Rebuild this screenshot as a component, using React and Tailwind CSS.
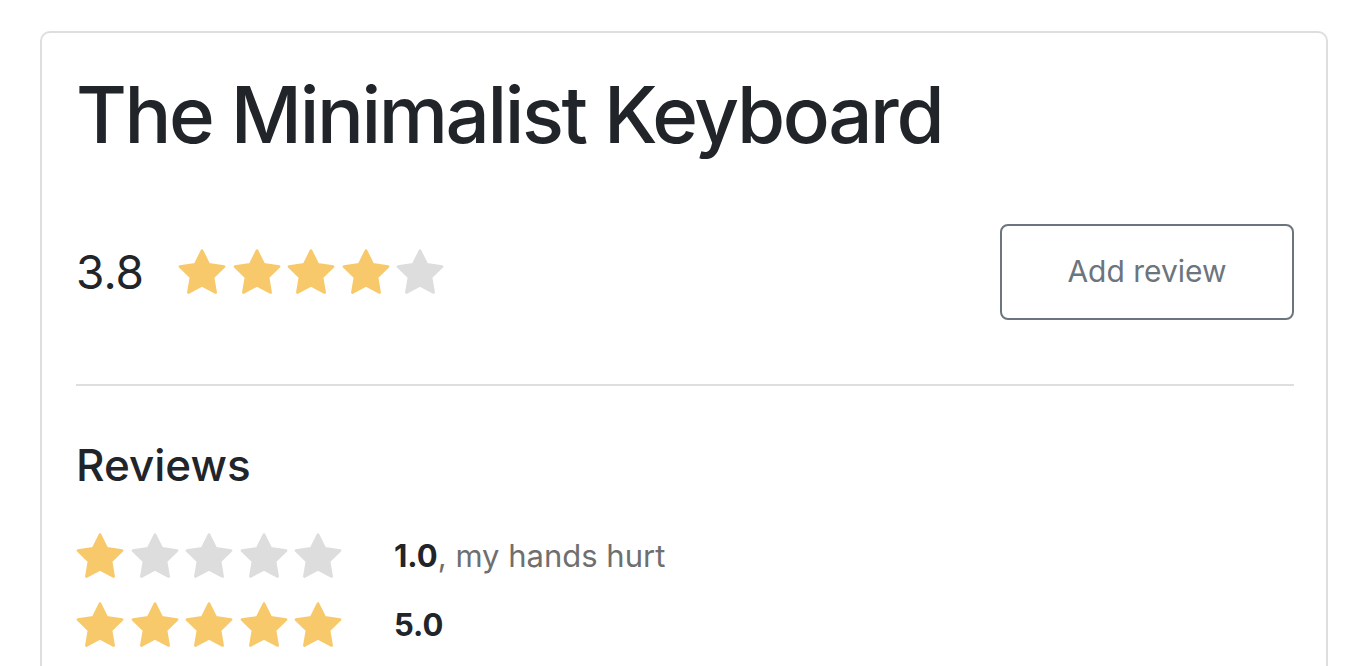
const GOLD = '#f8c96b';
const GRAY = '#dddddd';

function Star({ filled }) {
  const color = filled ? GOLD : GRAY;
  return (
    <svg width="48" height="45" viewBox="1.2 1.3 21.6 20.4" className="shrink-0">
      <path
        d="M12 2l3.09 6.26L22 9.27l-5 4.87 1.18 6.88L12 17.77l-6.18 3.25L7 14.14 2 9.27l6.91-1.01L12 2z"
        fill={color}
        stroke={color}
        strokeWidth="1.2"
        strokeLinejoin="round"
      />
    </svg>
  );
}

function Stars({ count }) {
  return (
    <div className="flex items-center gap-[6.5px]">
      {[0, 1, 2, 3, 4].map((i) => (
        <Star key={i} filled={i < count} />
      ))}
    </div>
  );
}

const reviews = [
  { rating: 1, score: '1.0', text: 'my hands hurt' },
  { rating: 5, score: '5.0', text: '' },
];

export default function App() {
  return (
    <div className="min-h-[666px] bg-white pt-[31px] pl-[40px] font-['Inter',sans-serif] text-[#212529]">
      <div className="w-[1288px] border-2 border-[#dedede] rounded-[10px] pl-[34px] pr-[32px] pt-[35px] pb-10 min-h-[700px]">
        <h1 className="text-[78px] font-medium leading-[1.2] tracking-[-2.4px]">The Minimalist Keyboard</h1>

        <div className="flex items-center justify-between mt-[62px]">
          <div className="flex items-center">
            <span className="text-[46px] leading-none mr-[34px]">3.8</span>
            <Stars count={4} />
          </div>
          <button className="w-[294px] h-[96px] border-2 border-[#6c757d] rounded-[8px] text-[30px] text-[#6c757d]">
            Add review
          </button>
        </div>

        <hr className="mt-[64px] border-t-2 border-[#dedede]" />

        <h3 className="mt-[53px] text-[44px] font-medium leading-[1.2]">Reviews</h3>

        <div className="mt-[42px] flex flex-col gap-[24px]">
          {reviews.map((r, i) => (
            <div key={i} className="flex items-center">
              <Stars count={r.rating} />
              <span className="ml-[52px] text-[31px] leading-none">
                <span className="font-bold">{r.score}</span>
                {r.text && <span className="text-[#6f6f6f]">, {r.text}</span>}
              </span>
            </div>
          ))}
        </div>
      </div>
    </div>
  );
}
